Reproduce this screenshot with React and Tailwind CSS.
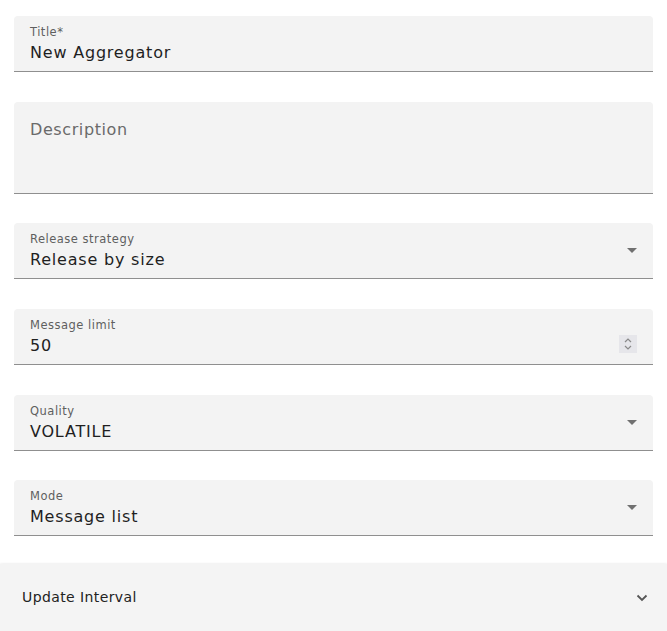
import React from 'react';

const font = { fontFamily: '"DejaVu Sans", "Open Sans", sans-serif' };

const Field = ({ label, value, children }) => (
  <div className="relative h-[56px] rounded-t-[4px] bg-[#f3f3f3] border-b border-[#8f8f8f] px-4">
    <div className="pt-[8px] text-[11.5px] leading-[16px] text-[#5f5f5f] tracking-[0.5px]">{label}</div>
    <div className="mt-[1px] text-[16px] leading-[24px] text-[#1f1f1f] tracking-[0.8px]">{value}</div>
    {children}
  </div>
);

const Caret = () => (
  <svg className="absolute right-[16px] top-[25px]" width="10" height="5" viewBox="0 0 10 5">
    <path d="M0 0 L10 0 L5 5 Z" fill="#707070" />
  </svg>
);

export default function App() {
  return (
    <div className="w-[667px] h-[631px] bg-white overflow-hidden" style={font}>
      <div className="px-[14px] pt-4 flex flex-col gap-[29.7px]">
        <Field label="Title*" value="New Aggregator" />

        <div className="h-[92px] rounded-t-[4px] bg-[#f3f3f3] border-b border-[#8f8f8f] px-4 pt-[16px]">
          <div className="text-[16px] leading-[24px] text-[#6a6a6a] tracking-[0.6px]">Description</div>
        </div>

        <Field label="Release strategy" value="Release by size">
          <Caret />
        </Field>

        <Field label="Message limit" value="50">
          <div className="absolute right-[16px] top-[26px] w-[18px] h-[18px] bg-[#e6e6ea] flex flex-col items-center justify-center gap-[2px]">
            <svg width="8" height="5" viewBox="0 0 8 5"><path d="M1 4 L4 1 L7 4" stroke="#8a8a8a" strokeWidth="1.2" fill="none" /></svg>
            <svg width="8" height="5" viewBox="0 0 8 5"><path d="M1 1 L4 4 L7 1" stroke="#8a8a8a" strokeWidth="1.2" fill="none" /></svg>
          </div>
        </Field>

        <Field label="Quality" value="VOLATILE">
          <Caret />
        </Field>

        <Field label="Mode" value="Message list">
          <Caret />
        </Field>
      </div>

      <div className="mt-[28px] h-[68px] bg-[#f4f4f4] shadow-[0_1px_3px_rgba(0,0,0,0.25)] flex items-center justify-between pl-[22px] pr-[19px]">
        <span className="text-[14px] font-medium text-[#222] tracking-[0.4px] -mt-[2px]">Update Interval</span>
        <svg width="12" height="8" viewBox="0 0 12 8">
          <path d="M1.5 1.5 L6 6 L10.5 1.5" stroke="#555" strokeWidth="1.8" fill="none" />
        </svg>
      </div>
    </div>
  );
}
